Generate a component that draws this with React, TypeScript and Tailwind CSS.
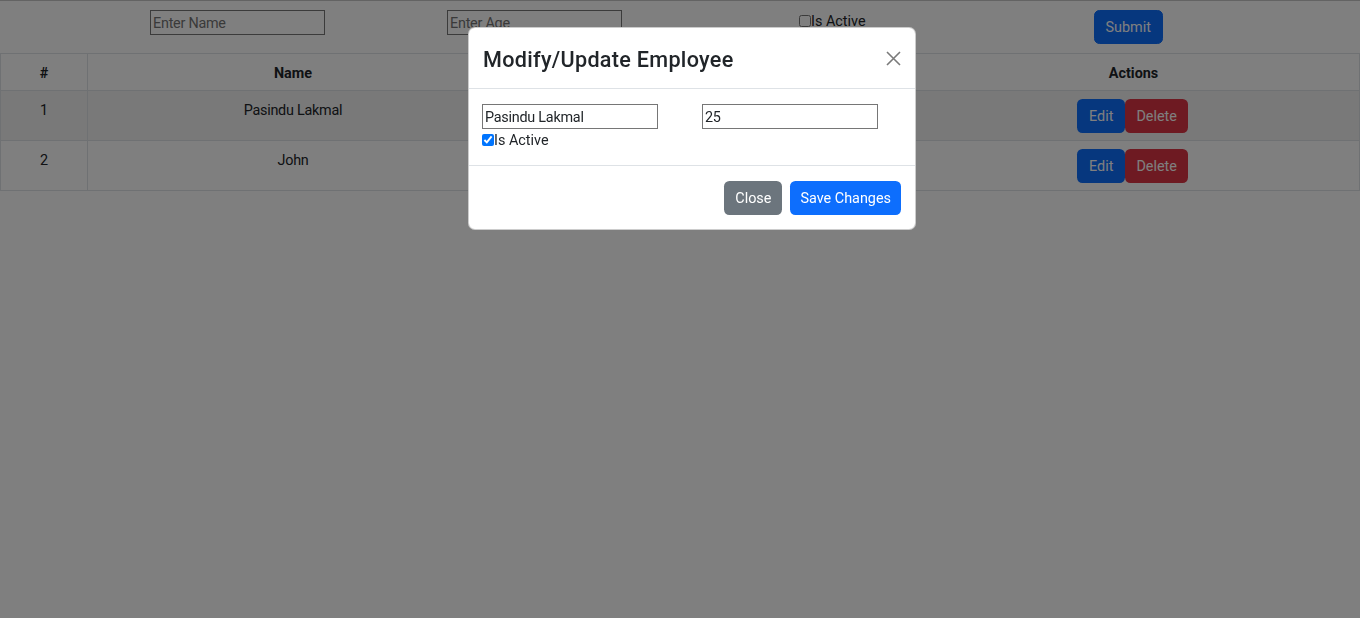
import React from "react";

const rows = [
  { id: 1, name: "Pasindu Lakmal", age: 25, active: true },
  { id: 2, name: "John", age: 30, active: false },
];

export default function App() {
  return (
    <div className="relative min-h-[618px] bg-white font-['Roboto','Noto_Sans',sans-serif] text-[14.4px] leading-[21.6px] text-[#212529]">
      {/* top form */}
      <div className="flex items-start h-[53px] border-t border-[#c6c6c6] pt-[9px]">
        <input
          className="ml-[150px] w-[175px] h-[25px] border border-[#767676] px-[2px] pt-[1px] text-[14.4px] tracking-[-0.25px] placeholder:text-[#757575] outline-none"
          placeholder="Enter Name"
        />
        <input
          className="ml-[122px] w-[175px] h-[25px] border border-[#767676] px-[2px] pt-[1px] text-[14.4px] tracking-[-0.25px] placeholder:text-[#757575] outline-none"
          placeholder="Enter Age"
        />
        <label className="ml-[177px] flex items-center">
          <input type="checkbox" className="m-0 w-[12px] h-[12px]" />
          <span className="pt-[1px]">Is Active</span>
        </label>
        <button className="ml-[228px] h-[34px] px-[11px] pt-[1px] rounded-[5.4px] bg-[#0d6efd] text-white border border-[#0d6efd]">
          Submit
        </button>
      </div>

      {/* table */}
      <table className="w-full border-collapse table-fixed">
        <colgroup>
          <col className="w-[87px]" />
          <col className="w-[411px]" />
          <col className="w-[205px]" />
          <col className="w-[204px]" />
          <col />
        </colgroup>
        <thead>
          <tr className="h-[37px]">
            <th className="border border-[#dee2e6] align-top pt-[9px] pb-[5px] text-center font-bold">#</th>
            <th className="border border-[#dee2e6] align-top pt-[9px] pb-[5px] text-center font-bold">Name</th>
            <th className="border border-[#dee2e6] align-top pt-[9px] pb-[5px] text-center font-bold">Age</th>
            <th className="border border-[#dee2e6] align-top pt-[9px] pb-[5px] text-center font-bold">Is Active</th>
            <th className="border border-[#dee2e6] align-top pt-[9px] pb-[5px] text-center font-bold">Actions</th>
          </tr>
        </thead>
        <tbody>
          {rows.map((r, i) => (
            <tr key={r.id} className={i === 0 ? "bg-[#f2f2f2] h-[50px]" : "bg-white h-[50px]"}>
              <td className="border border-[#dee2e6] align-top pt-[9px] text-center tracking-[-0.25px]">{r.id}</td>
              <td className="border border-[#dee2e6] align-top pt-[9px] text-center tracking-[-0.25px]">{r.name}</td>
              <td className="border border-[#dee2e6] align-top pt-[9px] text-center tracking-[-0.25px]">{r.age}</td>
              <td className="border border-[#dee2e6] align-top pt-[9px] text-center tracking-[-0.25px]">{r.active ? "Yes" : "No"}</td>
              <td className="border border-[#dee2e6] align-top pt-[8px] text-center">
                <div className="inline-flex -ml-[2px]">
                  <button className="h-[34px] px-[12px] pt-[2px] rounded-[5.4px] bg-[#0d6efd] text-white">Edit</button>
                  <button className="h-[34px] px-[11px] pt-[2px] rounded-[5.4px] bg-[#dc3545] text-white">Delete</button>
                </div>
              </td>
            </tr>
          ))}
        </tbody>
      </table>

      {/* backdrop */}
      <div className="fixed inset-0 bg-black/50" />

      {/* modal */}
      <div className="fixed inset-0 pt-[27px] pl-[468px]">
        <div className="w-[448px] bg-white rounded-[7px] border border-black/20 overflow-hidden">
          <div className="h-[61px] flex items-center justify-between pl-[14px] pr-[14px] pt-[3px] border-b border-[#dee2e6]">
            <h4 className="text-[21.6px] leading-[26px] font-medium tracking-[0.3px] text-[#212529]">Modify/Update Employee</h4>
            <svg width="15" height="15" viewBox="0 0 15 15" className="-mt-[2px]">
              <path d="M1 1 L14 14 M14 1 L1 14" stroke="#7a7a7a" strokeWidth="1.6" />
            </svg>
          </div>
          <div className="px-[13px] pt-[15px] pb-[14px] border-b border-[#dee2e6]">
            <div className="flex gap-[44px]">
              <input
                className="w-[176px] h-[25px] border border-[#767676] px-[2px] pt-[1px] text-[14.4px] tracking-[-0.25px] outline-none"
                defaultValue="Pasindu Lakmal"
              />
              <input
                className="w-[176px] h-[25px] border border-[#767676] px-[2px] pt-[1px] text-[14.4px] tracking-[-0.25px] outline-none"
                defaultValue="25"
              />
            </div>
            <label className="flex items-center h-[22px]">
              <input type="checkbox" defaultChecked className="m-0 w-[12px] h-[12px]" />
              <span className="pt-[2px]">Is Active</span>
            </label>
          </div>
          <div className="flex justify-end gap-[8px] px-[14px] pt-[15px] pb-[14px]">
            <button className="h-[34px] px-[11px] pt-[1px] rounded-[5.4px] bg-[#6c757d] text-white">Close</button>
            <button className="h-[34px] px-[10px] pt-[1px] rounded-[5.4px] bg-[#0d6efd] text-white">Save Changes</button>
          </div>
        </div>
      </div>
    </div>
  );
}
